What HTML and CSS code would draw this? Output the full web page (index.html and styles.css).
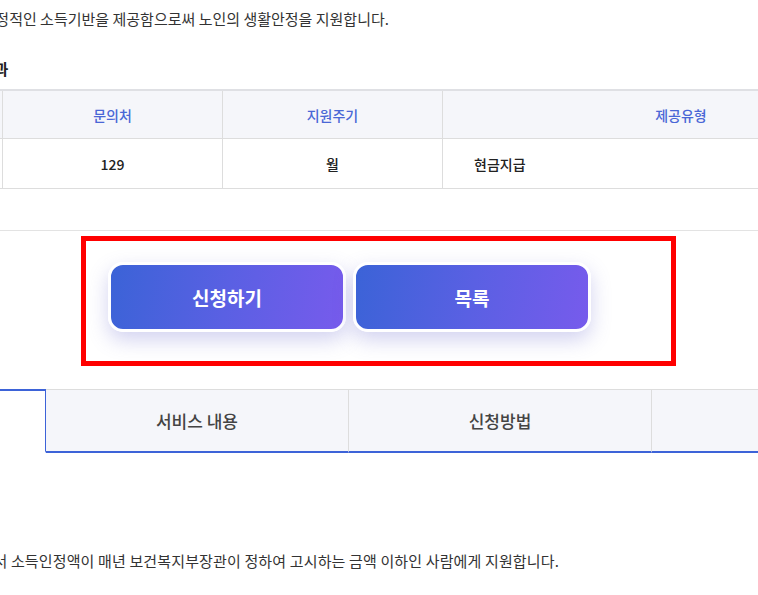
FILE: index.html
```html
<!DOCTYPE html>
<html>
<head>
  <title>기초연금 상세</title>
  <link rel="stylesheet" href="styles.css">
</head>
<body>
  <div class="page">
    <p class="intro">노인에게 안정적인 소득기반을 제공함으로써 노인의 생활안정을 지원합니다.</p>

    <h3 class="sub-title">처리결과</h3>

    <table class="info-table">
      <thead>
        <tr>
          <th class="col-hidden">신청기관</th>
          <th class="col-a">문의처</th>
          <th class="col-b">지원주기</th>
          <th class="col-c">제공유형</th>
        </tr>
      </thead>
      <tbody>
        <tr>
          <td class="col-hidden">주민센터</td>
          <td class="col-a">129</td>
          <td class="col-b">월</td>
          <td class="col-c left">현금지급</td>
        </tr>
      </tbody>
    </table>

    <div class="btn-area">
      <div class="highlight">
        <a class="btn" href="#">신청하기</a>
        <a class="btn" href="#">목록</a>
      </div>
    </div>

    <ul class="tabs">
      <li class="tab active">지원대상</li>
      <li class="tab">서비스 내용</li>
      <li class="tab">신청방법</li>
      <li class="tab">구비서류</li>
    </ul>

    <p class="target">65세 이상의 노인으로서 소득인정액이 매년 보건복지부장관이 정하여 고시하는 금액 이하인 사람에게 지원합니다.</p>
  </div>
</body>
</html>
```

FILE: styles.css
```css
body {
  margin: 0;
  padding: 0;
  overflow: hidden;
  background-color: #ffffff;
  font-family: "Noto Sans CJK KR", "Noto Sans", sans-serif;
  color: #222222;
}

.page {
  width: 1400px;
}

.intro {
  margin: 0;
  padding-top: 8px;
  margin-left: -77px;
  font-size: 15px;
  line-height: 22px;
  color: #333333;
}

.sub-title {
  margin: 0;
  margin-top: 28px;
  margin-left: -47px;
  font-size: 15px;
  line-height: 22px;
  font-weight: 700;
  color: #222222;
}

.info-table {
  width: 1137px;
  margin-top: 9px;
  margin-left: -218px;
  border-collapse: collapse;
  table-layout: fixed;
  font-size: 14px;
}

.info-table th,
.info-table td {
  border: 1px solid #dddddd;
  text-align: center;
  padding: 0;
}

.info-table th {
  height: 47px;
  background-color: #f5f6fa;
  color: #4a67d6;
  font-weight: 500;
  border-top: 2px solid #dfe0e4;
}

.info-table td {
  height: 49px;
  font-weight: 500;
  color: #222222;
}

.info-table .left {
  text-align: left;
  padding-left: 31px;
}

.col-hidden { width: 219px; }
.col-a { width: 219px; }
.col-b { width: 219px; }
.col-c { width: 476px; }

.btn-area {
  margin-top: 41px;
  border-top: 1px solid #e3e3e3;
  padding-top: 5px;
  padding-bottom: 23px;
}

.highlight {
  width: 553px;
  margin-left: 81px;
  padding: 21px 10px 29px 22px;
  border: 5px solid #ff0000;
  display: flex;
  gap: 7px;
}

.btn {
  display: flex;
  align-items: center;
  justify-content: center;
  width: 232px;
  height: 64px;
  border: 3px solid #ffffff;
  border-radius: 15px;
  background: linear-gradient(100deg, #3b63d7 0%, #5a60e3 50%, #775bec 100%);
  box-shadow: 0 8px 20px rgba(92, 94, 200, 0.28);
  color: #ffffff;
  font-size: 19px;
  font-weight: 700;
  text-decoration: none;
}

.tabs {
  list-style: none;
  margin: 0;
  margin-left: -257px;
  padding: 0;
  display: flex;
}

.tab {
  width: 302px;
  height: 61px;
  display: flex;
  align-items: center;
  justify-content: center;
  background-color: #f5f6fa;
  border-top: 1px solid #dddddd;
  border-right: 1px solid #dddddd;
  border-bottom: 2px solid #3d63d8;
  font-size: 17px;
  font-weight: 500;
  color: #444444;
}

.tab.active {
  background-color: #ffffff;
  border-top: 2px solid #3d63d8;
  border-right: 1px solid #3d63d8;
  border-bottom: 2px solid #ffffff;
  height: 60px;
  color: #3d63d8;
}

.target {
  margin: 0;
  margin-top: 97px;
  margin-left: -142px;
  font-size: 15px;
  line-height: 22px;
  letter-spacing: 0.14px;
  color: #333333;
}
```
